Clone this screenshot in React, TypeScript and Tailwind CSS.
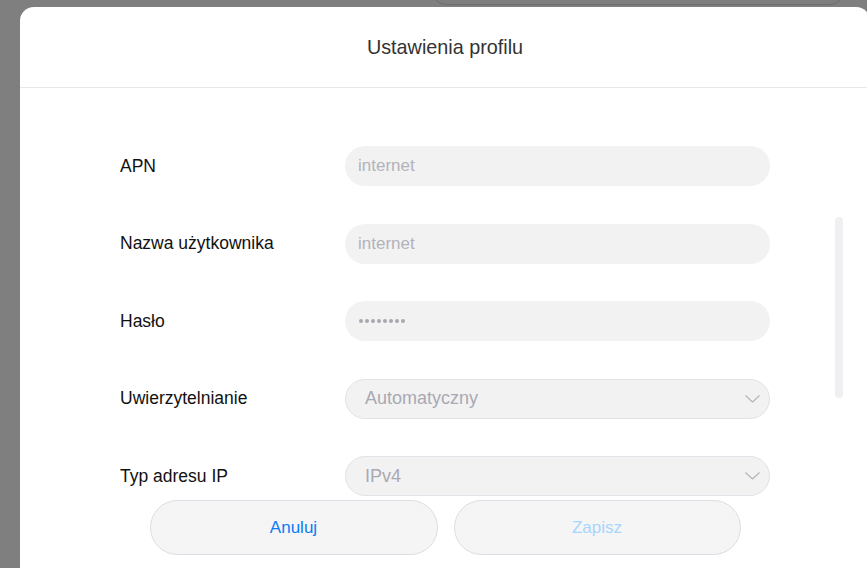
type Field = {
    label: string
    value: string
    kind: "text" | "password" | "select"
}

const fields: Field[] = [
    { label: "APN", value: "internet", kind: "text" },
    { label: "Nazwa użytkownika", value: "internet", kind: "text" },
    { label: "Hasło", value: "********", kind: "password" },
    { label: "Uwierzytelnianie", value: "Automatyczny", kind: "select" },
    { label: "Typ adresu IP", value: "IPv4", kind: "select" },
]

function Chevron() {
    return (
        <svg width="15" height="8" viewBox="0 0 15 8" fill="none" className="text-[#b4b4bc]">
            <polyline points="0.5,0.5 7.5,7 14.5,0.5" stroke="currentColor" strokeWidth="1.1" strokeLinejoin="round" />
        </svg>
    )
}

function FieldControl({ field }: { field: Field }) {
    if (field.kind === "select") {
        return (
            <div className="w-[425px] h-[40px] rounded-full bg-[#f2f2f3] border border-[#e2e2e8] flex items-center justify-between pl-[19px] pr-[9px]">
                <span className="text-[18px] text-[#a9a9b2]">{field.value}</span>
                <Chevron />
            </div>
        )
    }
    return (
        <div className="w-[425px] h-[40px] rounded-full bg-[#f2f2f2] flex items-center px-[13px]">
            {field.kind === "password" ? (
                <div className="flex gap-[2px] pl-[1px]">
                    {field.value.split("").map((_, i) => (
                        <span key={i} className="w-[4px] h-[4px] rounded-full bg-[#a8a8b0]"></span>
                    ))}
                </div>
            ) : (
                <span className="text-[17px] text-[#b3b3bb]">{field.value}</span>
            )}
        </div>
    )
}

export default function App() {
    return (
        <div className="relative w-[867px] h-[568px] overflow-hidden bg-[#7f7f7f] font-['Liberation_Sans',Arial,sans-serif]">
            {/* page element peeking under the overlay */}
            <div className="absolute left-[432px] top-[-40px] w-[412px] h-[45px] rounded-[14px] border border-[#6c6c6c]"></div>

            <div className="relative ml-[20px] mt-[7px] w-[850px] h-[600px] bg-white rounded-t-[14px]">
                {/* Header */}
                <div className="h-[81px] border-b border-[#e8e8ea] flex items-center justify-center">
                    <h2 className="text-[19.8px] text-[#333333] pt-[1px]">Ustawienia profilu</h2>
                </div>

                {/* Form */}
                <div className="pt-[58px] pl-[100px] flex flex-col gap-[37.5px]">
                    {fields.map((field) => (
                        <div key={field.label} className="flex items-center h-[40px]">
                            <div className="w-[225px] text-[17.5px] text-[#111111]">{field.label}</div>
                            <FieldControl field={field} />
                        </div>
                    ))}
                </div>

                {/* Scrollbar */}
                <div className="absolute left-[815px] top-[210px] w-[8px] h-[181px] rounded-full bg-[#f0f0f2]"></div>

                {/* Footer buttons */}
                <div className="mt-[4px] flex justify-center gap-[16px]">
                    <button className="w-[288px] h-[55px] rounded-full bg-[#f5f5f6] border border-[#dcdce4] text-[17px] text-[#0a7cf8]">
                        Anuluj
                    </button>
                    <button className="w-[287px] h-[55px] rounded-full bg-[#f5f5f6] border border-[#dcdce4] text-[17px] text-[#a6d6fc]">
                        Zapisz
                    </button>
                </div>
            </div>
        </div>
    )
}
